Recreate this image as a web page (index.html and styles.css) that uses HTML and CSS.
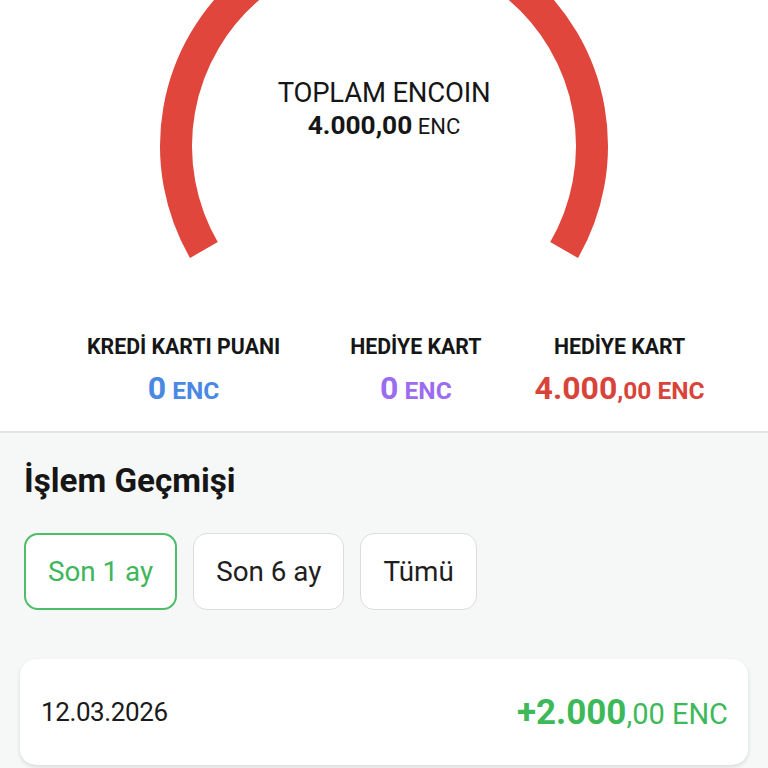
FILE: index.html
```html
<!DOCTYPE html>
<html lang="tr">
<head>
<meta charset="utf-8">
<link rel="stylesheet" href="styles.css">
</head>
<body>
<div class="top">
  <div class="gauge">
    <svg class="gauge-svg" width="768" height="300" viewBox="0 0 768 300">
      <path d="M 203.9 250 A 208 208 0 1 1 564.1 250" fill="none" stroke="#e0463b" stroke-width="32"/>
    </svg>
    <div class="gauge-text">
      <div class="gauge-title">TOPLAM ENCOIN</div>
      <div class="gauge-value"><b>4.000,00</b> <span>ENC</span></div>
    </div>
  </div>
  <div class="stats">
    <div class="stat stat-credit">
      <div class="stat-label">KREDİ KARTI PUANI</div>
      <div class="stat-value blue"><span class="big">0</span> ENC</div>
    </div>
    <div class="stat stat-gift">
      <div class="stat-label">HEDİYE KART</div>
      <div class="stat-value purple"><span class="big">0</span> ENC</div>
    </div>
    <div class="stat">
      <div class="stat-label">HEDİYE KART</div>
      <div class="stat-value red"><span class="big">4.000</span>,00 ENC</div>
    </div>
  </div>
</div>
<div class="history">
  <h2 class="history-title">İşlem Geçmişi</h2>
  <div class="chips">
    <div class="chip active">Son 1 ay</div>
    <div class="chip">Son 6 ay</div>
    <div class="chip">Tümü</div>
  </div>
  <div class="card">
    <div class="date">12.03.2026</div>
    <div class="amount"><b>+2.000</b>,00 ENC</div>
  </div>
</div>
</body>
</html>
```
FILE: styles.css
```css
* { box-sizing: border-box; }
html, body { margin: 0; padding: 0; }
body {
  width: 768px;
  height: 768px;
  overflow: hidden;
  font-family: Roboto, "Noto Sans", sans-serif;
  background: #f6f7f7;
  color: #161616;
}
.top {
  background: #fff;
  border-bottom: 2px solid #e3e4e4;
  height: 433px;
}
.gauge {
  display: grid;
  height: 300px;
}
.gauge-svg, .gauge-text {
  grid-area: 1 / 1;
}
.gauge-svg { display: block; }
.gauge-text {
  justify-self: center;
  align-self: start;
  padding-top: 76px;
  text-align: center;
}
.gauge-title {
  font-size: 27.5px;
  line-height: 33px;
  letter-spacing: -0.2px;
  color: #161616;
}
.gauge-value {
  font-size: 22px;
  line-height: 32px;
}
.gauge-value b { font-weight: 700; font-size: 26.3px; }
.gauge-value span { font-size: 22px; }
.stats {
  display: flex;
  padding-top: 34px;
  padding-left: 87px;
}
.stat {
  display: flex;
  flex-direction: column;
  align-items: center;
}
.stat-credit { margin-right: 70px; }
.stat-gift { margin-right: 53px; }
.stat-label {
  font-size: 21.3px;
  font-weight: 700;
  letter-spacing: 0;
  line-height: 26px;
}
.stat-value {
  font-size: 24.5px;
  font-weight: 700;
  margin-top: 10px;
  line-height: 36px;
}
.stat-value .big { font-size: 32px; }
.blue { color: #4a88e4; }
.purple { color: #9b6cf0; }
.red { color: #d9443a; }
.history {
  padding: 27px 20px 0 24px;
}
.history-title {
  margin: 0;
  font-size: 33.2px;
  font-weight: 700;
  line-height: 42px;
  color: #161616;
}
.chips {
  display: flex;
  gap: 16px;
  margin-top: 31px;
}
.chip {
  height: 77px;
  padding: 0 22px;
  display: flex;
  align-items: center;
  background: #fff;
  border: 1.5px solid #dcdcdc;
  border-radius: 14px;
  font-size: 27.8px;
  color: #1e1e1e;
}
.chip.active {
  border: 2px solid #4dbd68;
  color: #3fb65c;
}
.card {
  margin-top: 49px;
  margin-left: -4px;
  height: 106px;
  background: #fff;
  border-radius: 16px;
  box-shadow: 0 2px 4px rgba(0,0,0,0.12);
  display: flex;
  align-items: center;
  justify-content: space-between;
  padding: 0 20px 0 21px;
}
.date {
  font-size: 26px;
  color: #1a1a1a;
  letter-spacing: -0.4px;
}
.amount {
  font-size: 29px;
  color: #3db95a;
}
.amount b { font-size: 35px; font-weight: 700; }
```
